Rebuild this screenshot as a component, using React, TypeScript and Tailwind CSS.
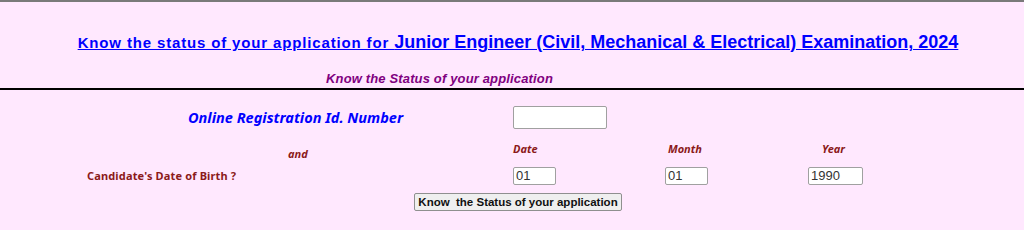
import React from 'react';

const label = "font-['Noto_Sans',sans-serif] font-bold text-[#8b1a1a]";
const box = "h-[18px] bg-white border border-[#a0a0a0] rounded-[2px] px-[2px] text-[13px] text-[#333] outline-none";

export default function App() {
  return (
    <div className="w-[1024px] h-[230px] overflow-hidden bg-[#ffe8fe] border-t-2 border-[#7a7a7a] font-['Liberation_Sans',Arial,sans-serif]">
      {/* Title */}
      <div className="pt-[28px] text-center leading-[24px] pl-[12px]">
        <a href="#" className="text-[#0000ff] font-bold underline">
          <span className="text-[15px] tracking-[0.85px]">Know the status of your application for </span>
          <span className="text-[18px]">Junior Engineer (Civil, Mechanical &amp; Electrical) Examination, 2024</span>
        </a>
      </div>

      <div className="mt-[16px] leading-[16px] pl-[326px] text-[13px] tracking-[0.15px] font-bold italic text-[#800080]">
        Know the Status of your application
      </div>
      <div className="mt-[1px] border-b-2 border-black" />

      {/* Registration id */}
      <div className="flex items-center pt-[16px]">
        <div className="w-[513px] pl-[188px] text-[14.5px] font-bold italic text-[#0000ff] font-['Noto_Sans',sans-serif]">
          Online Registration Id. Number
        </div>
        <input type="text" className="w-[94px] h-[23px] bg-white border border-[#a0a0a0] rounded-[2px] outline-none" />
      </div>

      {/* Date labels */}
      <div className="flex items-start mt-[13px] text-[11px] leading-[14px]">
        <div className={`w-[513px] pl-[288px] mt-[5px] italic ${label}`}>and</div>
        <div className={`w-[152px] italic ${label}`}>Date</div>
        <div className={`w-[143px] pl-[3px] italic ${label}`}>Month</div>
        <div className={`pl-[14px] italic ${label}`}>Year</div>
      </div>

      {/* Date of birth */}
      <div className="flex items-center mt-[6px] text-[11px]">
        <div className={`w-[513px] pl-[87px] ${label} tracking-[0.15px]`}>Candidate's Date of Birth ?</div>
        <div className="w-[152px]">
          <input type="text" defaultValue="01" className={`w-[43px] ${box}`} />
        </div>
        <div className="w-[143px]">
          <input type="text" defaultValue="01" className={`w-[43px] ${box}`} />
        </div>
        <input type="text" defaultValue="1990" className={`w-[55px] ${box}`} />
      </div>

      <div className="flex mt-[8px] pl-[414px]">
        <button className="w-[208px] h-[18px] bg-[#efefef] border border-[#8f8f8f] rounded-[2px] text-[11.5px] font-bold text-[#111] leading-[16px] whitespace-pre">
          Know  the Status of your application
        </button>
      </div>
    </div>
  );
}
